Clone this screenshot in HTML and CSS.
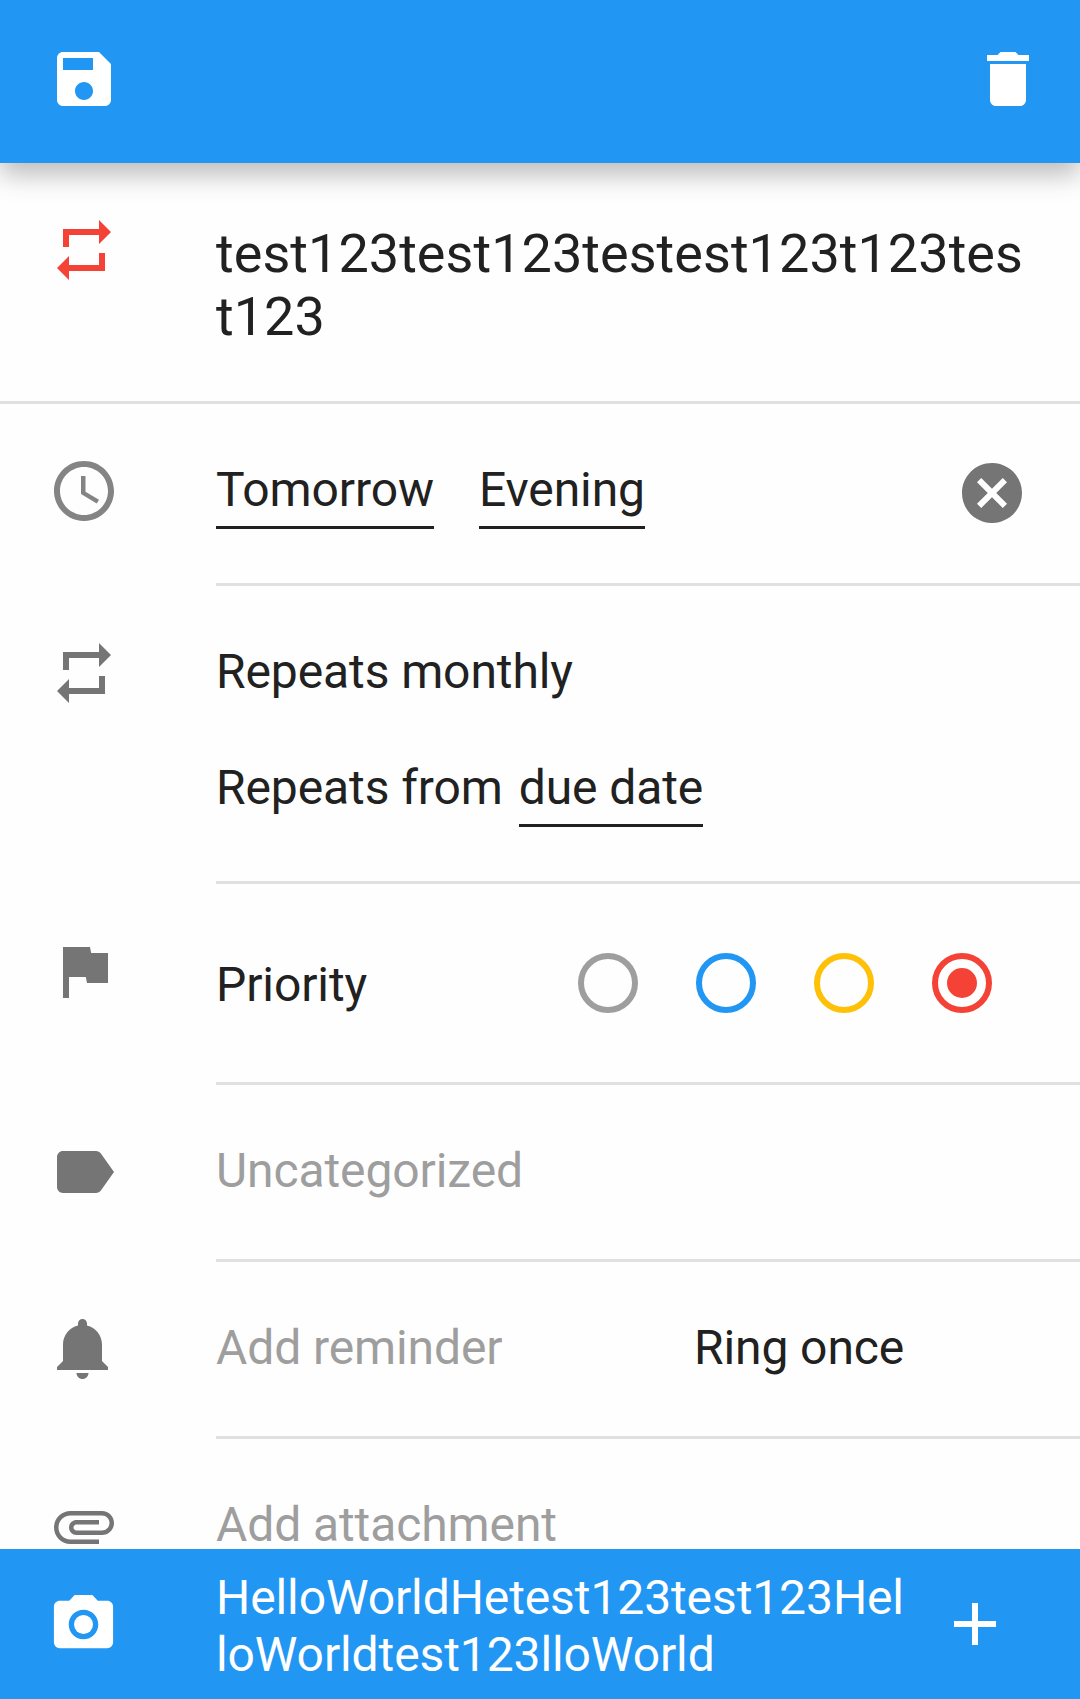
FILE: index.html
```html
<!DOCTYPE html>
<html lang="en">
<head>
<meta charset="utf-8">
<title>Edit task</title>
<link rel="stylesheet" href="styles.css">
</head>
<body>
<div class="app">
  <header class="toolbar">
    <svg class="icon" viewBox="0 0 24 24"><path d="M17 3H5c-1.110 0-2 .9-2 2v14c0 1.100.890 2 2 2h14c1.100 0 2-.9 2-2V7l-4-4zm-5 16c-1.660 0-3-1.340-3-3s1.340-3 3-3 3 1.340 3 3-1.340 3-3 3zm3-10H5V5h10v4z"/></svg>
    <svg class="icon" viewBox="0 0 24 24"><path d="M6 19c0 1.100.9 2 2 2h8c1.100 0 2-.9 2-2V7H6v12zM19 4h-3.500l-1-1h-5l-1 1H5v2h14V4z"/></svg>
  </header>

  <main class="form">
    <section class="row row-title">
      <svg class="icon icon-red" viewBox="0 0 24 24"><path d="M7 7h10v3l4-4-4-4v3H5v6h2V7zm10 10H7v-3l-4 4 4 4v-3h12v-6h-2v4z"/></svg>
      <div class="cell"><h1 class="title">test123test123testest123t123test123</h1></div>
    </section>

    <section class="row row-when">
      <svg class="icon icon-clock" viewBox="0 0 24 24"><path d="M12 2C6.480 2 2 6.480 2 12s4.480 10 10 10 10-4.480 10-10S17.520 2 12 2zm0 18c-4.420 0-8-3.580-8-8s3.580-8 8-8 8 3.580 8 8-3.580 8-8 8zM12.500 7H11v6l5.250 3.150.750-1.230-4.500-2.670z"/></svg>
      <div class="cell line">
        <span class="picker">Tomorrow</span>
        <span class="picker">Evening</span>
        <svg class="icon clear" viewBox="0 0 24 24"><path d="M12 2C6.470 2 2 6.470 2 12s4.470 10 10 10 10-4.470 10-10S17.530 2 12 2zm5 13.590L15.590 17 12 13.410 8.410 17 7 15.590 10.590 12 7 8.410 8.410 7 12 10.590 15.590 7 17 8.410 13.410 12 17 15.590z"/></svg>
      </div>
    </section>

    <section class="row row-repeat">
      <svg class="icon" viewBox="0 0 24 24"><path d="M7 7h10v3l4-4-4-4v3H5v6h2V7zm10 10H7v-3l-4 4 4 4v-3h12v-6h-2v4z"/></svg>
      <div class="cell">
        <div>Repeats monthly</div>
        <div class="from"><span>Repeats from</span><span class="picker">due date</span></div>
      </div>
    </section>

    <section class="row row-priority">
      <svg class="icon" viewBox="0 0 24 24"><path d="M14.400 6L14 4H5v17h2v-7h5.600l.4 2h7V6z"/></svg>
      <div class="cell line">
        <span class="priority-label">Priority</span>
        <div class="radios">
          <span class="radio radio-none"></span>
          <span class="radio radio-low"></span>
          <span class="radio radio-medium"></span>
          <span class="radio radio-high checked"></span>
        </div>
      </div>
    </section>

    <section class="row">
      <svg class="icon" viewBox="0 0 24 24"><path d="M17.630 5.840C17.270 5.330 16.670 5 16 5L5 5.010C3.900 5.010 3 5.900 3 7v10c0 1.100.9 1.990 2 1.990L16 19c.67 0 1.270-.33 1.630-.84L22 12l-4.370-6.160z"/></svg>
      <div class="cell hint">Uncategorized</div>
    </section>

    <section class="row">
      <svg class="icon" viewBox="0 0 24 24"><path d="M11.500 22c1.100 0 2-.9 2-2h-4c0 1.100.9 2 2 2zm6.500-6v-5.500c0-3.070-2.130-5.640-5-6.320V3.500c0-.83-.67-1.500-1.500-1.500S10 2.670 10 3.500v.68c-2.870.68-5 3.250-5 6.320V16l-2 2v1h17v-1l-2-2z"/></svg>
      <div class="cell line"><span class="hint reminder">Add reminder</span><span>Ring once</span></div>
    </section>

    <section class="row row-last">
      <svg class="icon" viewBox="0 0 24 24"><path d="M7.500 18C4.460 18 2 15.540 2 12.500S4.460 7 7.500 7H18c2.210 0 4 1.790 4 4s-1.790 4-4 4H9.500C8.120 15 7 13.880 7 12.500S8.120 10 9.500 10H17v1.500H9.500c-.55 0-1 .45-1 1s.45 1 1 1H18c1.380 0 2.500-1.120 2.500-2.500S19.380 8.500 18 8.500H7.500c-2.210 0-4 1.790-4 4s1.790 4 4 4H17V18H7.500z"/></svg>
      <div class="cell hint">Add attachment</div>
    </section>
  </main>

  <footer class="comment-bar">
    <svg class="icon camera" viewBox="0 0 24 24"><circle cx="12" cy="12" r="3.200"/><path d="M9 2L7.170 4H4c-1.100 0-2 .9-2 2v12c0 1.100.9 2 2 2h16c1.100 0 2-.9 2-2V6c0-1.100-.9-2-2-2h-3.170L15 2H9zm3 15c-2.760 0-5-2.240-5-5s2.240-5 5-5 5 2.240 5 5-2.240 5-5 5z"/></svg>
    <p class="comment">HelloWorldHetest123test123HelloWorldtest123lloWorld</p>
    <svg class="icon" viewBox="0 0 24 24"><path d="M19 13h-6v6h-2v-6H5v-2h6V5h2v6h6v2z"/></svg>
  </footer>
</div>
</body>
</html>
```

FILE: styles.css
```css
* {
  box-sizing: border-box;
}

body {
  margin: 0;
  background: #fefefe;
  color: #212121;
  font: 48px/56px Roboto, sans-serif;
  letter-spacing: -0.1px;
}

.app {
  display: flex;
  flex-direction: column;
  height: 1699px;
}

.icon {
  display: block;
  flex: none;
  width: 72px;
  height: 72px;
  fill: #757575;
}

/* Top toolbar */
.toolbar {
  flex: none;
  position: relative;
  display: flex;
  justify-content: space-between;
  height: 163px;
  padding: 43px 36px 0 48px;
  background: #2196f3;
  box-shadow: 0 12px 24px rgba(0, 0, 0, 0.26);
}

.toolbar .icon,
.comment-bar .icon {
  fill: #fff;
}

/* Form rows: icon column and content column */
.form {
  flex: 1;
  min-height: 0;
}

.row {
  display: grid;
  grid-template-columns: 216px 1fr;
  height: 177px;
}

.row > .icon {
  margin: 51px 0 0 48px;
}

.cell {
  padding-top: 58px;
  border-bottom: 3px solid #e0e0e0;
}

.line {
  display: flex;
  align-items: flex-start;
}

.hint {
  color: #9e9e9e;
}

.picker {
  padding-bottom: 8px;
  border-bottom: 3px solid #212121;
}

.row-title {
  height: 241px;
  border-bottom: 3px solid #e0e0e0;
}

.row-title .cell {
  padding: 59px 48px 0 0;
  border: 0;
}

.row-title .icon-red {
  fill: #f44336;
}

.title {
  margin: 0;
  font-size: 54px;
  line-height: 63px;
  font-weight: 400;
  letter-spacing: 0.04px;
  word-break: break-all;
}

.row-when {
  height: 182px;
}

.row-when .line {
  gap: 45px;
}

.row-when .icon-clock {
  fill: #848484;
}

.clear {
  margin: -5px 52px 0 auto;
}

.row-repeat {
  height: 298px;
}

.from {
  display: flex;
  gap: 16px;
  margin-top: 60px;
}

/* Priority selector */
.row-priority {
  height: 201px;
}

.row-priority .cell {
  padding-top: 69px;
}

.priority-label {
  padding-top: 4px;
}

.radios {
  display: flex;
  gap: 58px;
  margin: 0 88px 0 auto;
}

.radio {
  width: 60px;
  height: 60px;
  padding: 9px;
  border: 6px solid;
  border-radius: 50%;
}

.checked::after {
  content: "";
  display: block;
  width: 30px;
  height: 30px;
  border-radius: 50%;
  background: currentColor;
}

.radio-none { color: #9e9e9e; }
.radio-low { color: #2196f3; }
.radio-medium { color: #ffc107; }
.radio-high { color: #f44336; }

.reminder {
  width: 478px;
}

.row-last {
  height: 110px;
}

.row-last .cell {
  padding-top: 62px;
  border: 0;
  line-height: 48px;
}

/* Comment bar */
.comment-bar {
  flex: none;
  display: flex;
  height: 150px;
  padding: 39px 69px 0 48px;
  background: #2196f3;
  color: #fff;
}

.comment-bar .camera {
  width: 71px;
  height: 71px;
  margin-top: 0.5px;
}

.comment {
  width: 692px;
  margin: -19px auto 0 97px;
  line-height: 57px;
  word-break: break-all;
}
```
